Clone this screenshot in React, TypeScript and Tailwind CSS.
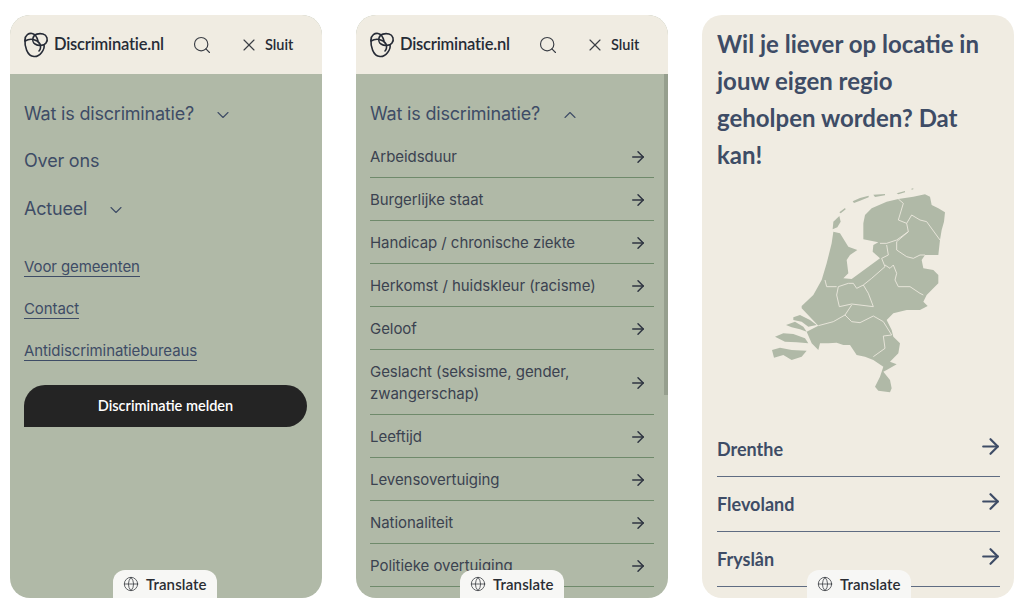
import { ArrowRight, ChevronDown, ChevronUp, Globe, Search, X } from 'lucide-react';

const topics = [
  'Arbeidsduur',
  'Burgerlijke staat',
  'Handicap / chronische ziekte',
  'Herkomst / huidskleur (racisme)',
  'Geloof',
  'Geslacht (seksisme, gender, zwangerschap)',
  'Leeftijd',
  'Levensovertuiging',
  'Nationaliteit',
  'Politieke overtuiging',
];

const regions = ['Drenthe', 'Flevoland', 'Fryslân'];

const Logo = () => (
  <svg width="26" height="26" viewBox="0 0 26 26" fill="none" stroke="#262b36" strokeWidth="1.6" strokeLinecap="round" strokeLinejoin="round">
    <path d="M2 8C1.500 14 4 24 11 24.500C17 25 22 17 21 13" />
    <path d="M2 8C2 3 6 1 9 1.500C12 2 14 5 15 9" />
    <path d="M10 6C11 2 16 1 20 2C24 3 25.500 8 23 11C21 14 15 14 12 12C10 11 9.500 8 10 6Z" />
    <path d="M2 9C7 6 14 7 17 12C18 15 17 18 16 19" />
  </svg>
);

const Header = () => (
  <div className="flex h-[59px] shrink-0 items-center bg-[#f0ece2] pl-[13px] text-[#262b36]">
    <Logo />
    <span className="ml-[5px] w-[111px] whitespace-nowrap font-['Lato',sans-serif] text-[16.500px] font-semibold tracking-[-0.2px]">Discriminatie.nl</span>
    <Search className="ml-[27px] h-[20px] w-[20px] text-[#3b3f46]" strokeWidth={1.4} />
    <X className="ml-[27px] h-[20px] w-[20px] text-[#3b3f46]" strokeWidth={1.4} />
    <span className="ml-[6px] font-['Lato',sans-serif] text-[14.500px] font-semibold">Sluit</span>
  </div>
);

const Translate = ({ className }: { className: string }) => (
  <div className={`absolute bottom-0 flex h-[28px] w-[104px] items-center rounded-t-[12px] bg-[#f7f7f5] pl-[10px] text-[#2a2d33] ${className}`}>
    <Globe className="h-[16px] w-[16px] text-[#3a3d42]" strokeWidth={1.2} />
    <span className="ml-[7px] font-['Lato',sans-serif] text-[15px] font-semibold tracking-[0.1px]">Translate</span>
  </div>
);

const NlMap = () => (
  <svg width="210" height="220" viewBox="0 0 630 660" className="ml-[33px] mt-[7px] block">
    <g fill="#b0b9a7">
      <path d="M340 130L345 105L365 85L410 65L445 57L490 50L525 43L540 50L545 75L565 85L585 97L582 125L575 150L570 180L565 225L525 225L515 240L520 265L550 270L565 285L565 310L550 325L530 345L520 365L533 378L510 390L470 390L430 400L410 420L425 450L430 470L450 490L445 520L420 545L440 553L410 570L400 575L420 600L425 625L420 637L385 632L375 620L390 590L400 560L370 540L345 530L320 525L300 495L280 495L260 488L235 490L210 490L205 510L185 490L170 455L205 437L155 385L155 378L190 345L215 300L230 250L245 190L250 155L270 160L295 200L322 210L300 225L290 240L295 280L280 295L305 297L390 235L368 215L370 195L385 187L340 178Z" />
      <path d="M248 148L250 125L268 108L272 125L262 142Z" />
      <path d="M268 97L285 84L287 88L272 100Z" />
      <path d="M308 64L330 54L356 47L356 52L330 62L312 69Z" />
      <path d="M370 44L405 42L405 46L375 51Z" />
      <path d="M440 40L465 33L465 37L445 43Z" />
      <path d="M484 26L490 25L490 28L485 29Z" />
      <path d="M130 412L150 405L180 420L200 435L175 440L155 425L130 420Z" />
      <path d="M108 435L135 425L160 440L170 455L150 448L125 442Z" />
      <path d="M75 470L100 460L130 462L165 475L175 490L140 487L105 485Z" />
      <path d="M66 510L90 503L125 510L170 512L155 530L125 540L100 525L72 533Z" />
    </g>
    <g fill="none" stroke="#f0ece2" strokeWidth="2.500" strokeLinejoin="round">
      <path d="M445 57L460 70L445 120L470 130L475 155L440 180L410 190L390 190" />
      <path d="M470 130L485 105L510 120L530 125L570 180" />
      <path d="M475 155L440 185L440 210L470 230L490 235L510 225L525 225" />
      <path d="M410 195L415 225L395 235L405 260L365 295L340 315" />
      <path d="M405 255L420 265L430 255L440 280L435 300L445 320L480 320L510 340L520 345" />
      <path d="M340 315L320 325L310 310L295 310L265 320L260 345L268 380L305 372L370 380L355 340L340 315" />
      <path d="M225 300L230 320L260 320" />
      <path d="M285 405L305 425L330 428L370 408L400 425L425 465" />
      <path d="M205 437L250 425L285 405L305 375" />
      <path d="M425 465L400 468L405 505L370 530" />
    </g>
  </svg>
);

export default function App() {
  return (
    <div className="flex min-h-[614px] gap-[34px] bg-white pl-[10px] pt-[15px] font-['Inter',sans-serif]">
      <div className="relative flex h-[583px] w-[312px] flex-col overflow-hidden rounded-[20px] bg-[#b0b9a7]">
        <Header />
        <div className="flex flex-col px-[14px] pt-[26px] text-[18px] tracking-[-0.2px] text-[#3e4c66]">
          <div className="flex h-[26px] items-center">
            Wat is discriminatie?
            <ChevronDown className="ml-[19px] mt-[4px] h-[20px] w-[20px]" strokeWidth={1.3} />
          </div>
          <div className="mt-[21px] flex h-[26px] items-center">Over ons</div>
          <div className="mt-[22px] flex h-[26px] items-center">
            Actueel
            <ChevronDown className="ml-[19px] mt-[4px] h-[20px] w-[20px]" strokeWidth={1.3} />
          </div>
          <a className="mt-[36px] self-start border-b border-[#3e4c66] text-[15px] leading-[19px] tracking-[-0.1px]">Voor gemeenten</a>
          <a className="mt-[22px] self-start border-b border-[#3e4c66] text-[15px] leading-[19px] tracking-[-0.1px]">Contact</a>
          <a className="mt-[22px] self-start border-b border-[#3e4c66] text-[15px] leading-[19px] tracking-[-0.1px]">Antidiscriminatiebureaus</a>
          <button className="mt-[24px] flex h-[42px] w-[283px] items-center justify-center rounded-[22px] rounded-bl-none bg-[#242424] font-['Lato',sans-serif] text-[14.500px] font-semibold tracking-normal text-white">
            Discriminatie melden
          </button>
        </div>
        <Translate className="left-[103px]" />
      </div>

      <div className="relative flex h-[583px] w-[312px] flex-col overflow-hidden rounded-[20px] bg-[#b0b9a7]">
        <Header />
        <div className="flex flex-col px-[14px] pt-[26px]">
          <div className="flex h-[26px] items-center text-[18px] tracking-[-0.2px] text-[#3e4c66]">
            Wat is discriminatie?
            <ChevronUp className="ml-[20px] mt-[3px] h-[20px] w-[20px]" strokeWidth={1.3} />
          </div>
          <div className="mt-[9px] flex flex-col">
            {topics.map((t) => (
              <div key={t} className="flex items-center justify-between border-b border-[#6f8a6b] pb-[9px] pr-[7px] pt-[11px] text-[15px] leading-[22px] tracking-[-0.05px] text-[#3b4250]">
                <span className="w-[230px]">{t}</span>
                <ArrowRight className="h-[18px] w-[18px] text-[#2f3542]" strokeWidth={2} />
              </div>
            ))}
          </div>
        </div>
        <div className="absolute right-0 top-[59px] h-[321px] w-[4px] bg-[#969f8e]" />
        <Translate className="left-[104px]" />
      </div>

      <div className="relative flex h-[583px] w-[312px] flex-col overflow-hidden rounded-[20px] bg-[#f0ece2] pl-[15px] pr-[14px]">
        <h2 className="mt-[10px] max-w-[272px] font-['Lato',sans-serif] text-[24px] font-bold leading-[37px] text-[#3e4c66]">
          Wil je liever op locatie in jouw eigen regio geholpen worden? Dat kan!
        </h2>
        <NlMap />
        <div className="mt-[22px] flex flex-col">
          {regions.map((r) => (
            <div key={r} className="flex h-[55px] items-center justify-between border-b border-[#5f6c82] pt-[1px] font-['Lato',sans-serif] text-[18px] font-bold text-[#3e4c66]">
              <span>{r}</span>
              <ArrowRight className="-mr-[3px] mb-[6px] h-[25px] w-[25px]" strokeWidth={2.1} />
            </div>
          ))}
        </div>
        <Translate className="left-[105px]" />
      </div>
    </div>
  );
}
